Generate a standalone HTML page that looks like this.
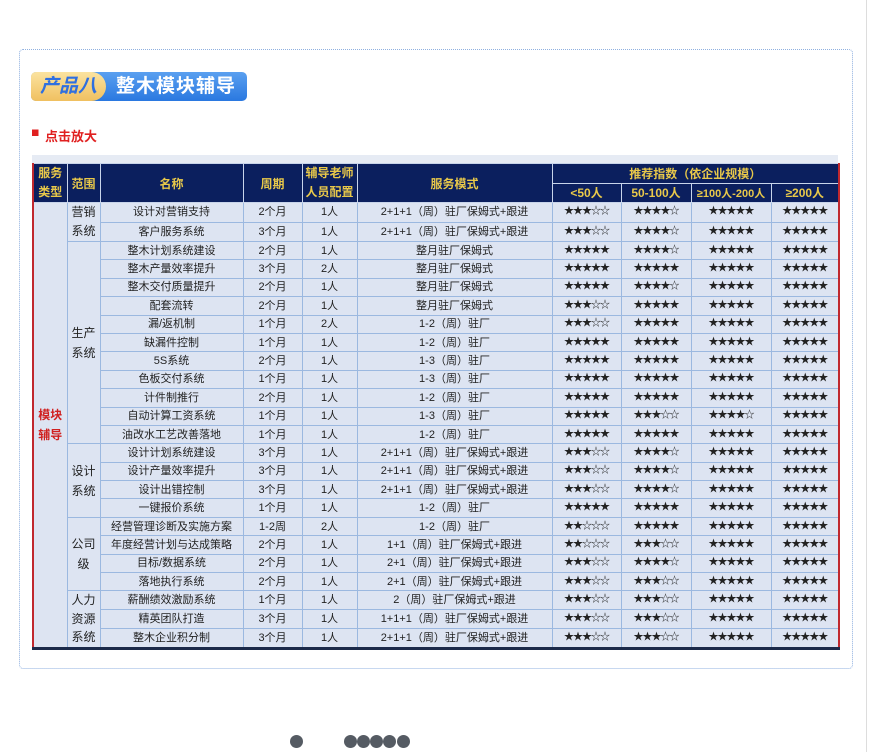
<!DOCTYPE html>
<html><head><meta charset="utf-8"><style>
body{margin:0;width:872px;height:752px;background:#fff;position:relative;overflow:hidden;font-family:"Liberation Sans","Noto Sans CJK SC",sans-serif}
.card{position:absolute;left:19px;top:49px;width:832px;height:618px;border:1px dotted #8fb0e0;border-radius:4px}
.vline{position:absolute;left:866px;top:0;width:1px;height:752px;background:#ddd}
.badge{position:absolute;left:31px;top:72px;width:216px;height:29px;border-radius:5px;background:linear-gradient(#5aa0f0,#2a78e0)}
.badge .y{position:absolute;left:0;top:0;width:75px;height:29px;border-radius:5px 15px 15px 5px;background:linear-gradient(#fbe3a0,#f0c060);color:#2f6fe0;font-style:italic;font-weight:bold;font-size:19px;line-height:29px;text-align:center}
.badge .t{position:absolute;left:85px;top:0;color:#fff;font-weight:bold;font-size:19px;line-height:29px;letter-spacing:1px}
.click{position:absolute;left:32px;top:126px;color:#e02020;font-size:13px;font-weight:bold}
.strip{position:absolute;left:32px;top:155px;width:806px;height:8px;background:#e6ebf4}
table{position:absolute;left:32px;top:163px;width:806px;border-collapse:collapse;table-layout:fixed;font-size:11px;color:#222;border-left:2px solid #c0282e;border-right:2px solid #c0282e;border-bottom:3px solid #1c2a4a}
td,th{border:1px solid #9bb8e0;padding:0;text-align:center;white-space:nowrap;overflow:hidden}
th{background:#0b1f5e;color:#e8c84a;font-size:12px;border-color:#c8d4ea;height:17px;font-weight:bold}
td{background:#dde4f2;height:17.4px;line-height:16px}
td.st{letter-spacing:-1px;font-size:10px}
.dot{position:absolute;width:13px;height:13px;border-radius:50%;background:#555b63}
</style></head><body>
<div class="vline"></div>
<div class="card"></div>
<div class="badge"><div class="y">产品八</div><div class="t">整木模块辅导</div></div>
<div class="click">▘点击放大</div>
<div class="strip"></div>
<table>
<colgroup><col style="width:34px"><col style="width:33px"><col style="width:143px"><col style="width:59px"><col style="width:55px"><col style="width:195px"><col style="width:69px"><col style="width:70px"><col style="width:80px"><col style="width:68px"></colgroup>
<tr><th rowspan="2" style="line-height:19px">服务<br>类型</th><th rowspan="2">范围</th><th rowspan="2">名称</th><th rowspan="2">周期</th><th rowspan="2" style="line-height:19px">辅导老师<br>人员配置</th><th rowspan="2">服务模式</th><th colspan="4">推荐指数（依企业规模）</th></tr>
<tr><th>&lt;50人</th><th>50-100人</th><th style="font-size:11px">≥100人-200人</th><th>≥200人</th></tr>
<tr><td rowspan="24" style="color:#d02020;font-weight:bold;font-size:12px;line-height:20px">模块<br>辅导</td><td rowspan="2" style="font-size:12px;line-height:19px">营销<br>系统</td><td>设计对营销支持</td><td>2个月</td><td>1人</td><td>2+1+1（周）驻厂保姆式+跟进</td><td class="st">★★★☆☆</td><td class="st">★★★★☆</td><td class="st">★★★★★</td><td class="st">★★★★★</td></tr>
<tr><td>客户服务系统</td><td>3个月</td><td>1人</td><td>2+1+1（周）驻厂保姆式+跟进</td><td class="st">★★★☆☆</td><td class="st">★★★★☆</td><td class="st">★★★★★</td><td class="st">★★★★★</td></tr>
<tr><td rowspan="11" style="font-size:12px;line-height:20px">生产<br>系统</td><td>整木计划系统建设</td><td>2个月</td><td>1人</td><td>整月驻厂保姆式</td><td class="st">★★★★★</td><td class="st">★★★★☆</td><td class="st">★★★★★</td><td class="st">★★★★★</td></tr>
<tr><td>整木产量效率提升</td><td>3个月</td><td>2人</td><td>整月驻厂保姆式</td><td class="st">★★★★★</td><td class="st">★★★★★</td><td class="st">★★★★★</td><td class="st">★★★★★</td></tr>
<tr><td>整木交付质量提升</td><td>2个月</td><td>1人</td><td>整月驻厂保姆式</td><td class="st">★★★★★</td><td class="st">★★★★☆</td><td class="st">★★★★★</td><td class="st">★★★★★</td></tr>
<tr><td>配套流转</td><td>2个月</td><td>1人</td><td>整月驻厂保姆式</td><td class="st">★★★☆☆</td><td class="st">★★★★★</td><td class="st">★★★★★</td><td class="st">★★★★★</td></tr>
<tr><td>漏/返机制</td><td>1个月</td><td>2人</td><td>1-2（周）驻厂</td><td class="st">★★★☆☆</td><td class="st">★★★★★</td><td class="st">★★★★★</td><td class="st">★★★★★</td></tr>
<tr><td>缺漏件控制</td><td>1个月</td><td>1人</td><td>1-2（周）驻厂</td><td class="st">★★★★★</td><td class="st">★★★★★</td><td class="st">★★★★★</td><td class="st">★★★★★</td></tr>
<tr><td>5S系统</td><td>2个月</td><td>1人</td><td>1-3（周）驻厂</td><td class="st">★★★★★</td><td class="st">★★★★★</td><td class="st">★★★★★</td><td class="st">★★★★★</td></tr>
<tr><td>色板交付系统</td><td>1个月</td><td>1人</td><td>1-3（周）驻厂</td><td class="st">★★★★★</td><td class="st">★★★★★</td><td class="st">★★★★★</td><td class="st">★★★★★</td></tr>
<tr><td>计件制推行</td><td>2个月</td><td>1人</td><td>1-2（周）驻厂</td><td class="st">★★★★★</td><td class="st">★★★★★</td><td class="st">★★★★★</td><td class="st">★★★★★</td></tr>
<tr><td>自动计算工资系统</td><td>1个月</td><td>1人</td><td>1-3（周）驻厂</td><td class="st">★★★★★</td><td class="st">★★★☆☆</td><td class="st">★★★★☆</td><td class="st">★★★★★</td></tr>
<tr><td>油改水工艺改善落地</td><td>1个月</td><td>1人</td><td>1-2（周）驻厂</td><td class="st">★★★★★</td><td class="st">★★★★★</td><td class="st">★★★★★</td><td class="st">★★★★★</td></tr>
<tr><td rowspan="4" style="font-size:12px;line-height:20px">设计<br>系统</td><td>设计计划系统建设</td><td>3个月</td><td>1人</td><td>2+1+1（周）驻厂保姆式+跟进</td><td class="st">★★★☆☆</td><td class="st">★★★★☆</td><td class="st">★★★★★</td><td class="st">★★★★★</td></tr>
<tr><td>设计产量效率提升</td><td>3个月</td><td>1人</td><td>2+1+1（周）驻厂保姆式+跟进</td><td class="st">★★★☆☆</td><td class="st">★★★★☆</td><td class="st">★★★★★</td><td class="st">★★★★★</td></tr>
<tr><td>设计出错控制</td><td>3个月</td><td>1人</td><td>2+1+1（周）驻厂保姆式+跟进</td><td class="st">★★★☆☆</td><td class="st">★★★★☆</td><td class="st">★★★★★</td><td class="st">★★★★★</td></tr>
<tr><td>一键报价系统</td><td>1个月</td><td>1人</td><td>1-2（周）驻厂</td><td class="st">★★★★★</td><td class="st">★★★★★</td><td class="st">★★★★★</td><td class="st">★★★★★</td></tr>
<tr><td rowspan="4" style="font-size:12px;line-height:20px">公司<br>级</td><td>经营管理诊断及实施方案</td><td>1-2周</td><td>2人</td><td>1-2（周）驻厂</td><td class="st">★★☆☆☆</td><td class="st">★★★★★</td><td class="st">★★★★★</td><td class="st">★★★★★</td></tr>
<tr><td>年度经营计划与达成策略</td><td>2个月</td><td>1人</td><td>1+1（周）驻厂保姆式+跟进</td><td class="st">★★☆☆☆</td><td class="st">★★★☆☆</td><td class="st">★★★★★</td><td class="st">★★★★★</td></tr>
<tr><td>目标/数据系统</td><td>2个月</td><td>1人</td><td>2+1（周）驻厂保姆式+跟进</td><td class="st">★★★☆☆</td><td class="st">★★★★☆</td><td class="st">★★★★★</td><td class="st">★★★★★</td></tr>
<tr><td>落地执行系统</td><td>2个月</td><td>1人</td><td>2+1（周）驻厂保姆式+跟进</td><td class="st">★★★☆☆</td><td class="st">★★★☆☆</td><td class="st">★★★★★</td><td class="st">★★★★★</td></tr>
<tr><td rowspan="3" style="font-size:12px;line-height:18.5px">人力<br>资源<br>系统</td><td>薪酬绩效激励系统</td><td>1个月</td><td>1人</td><td>2（周）驻厂保姆式+跟进</td><td class="st">★★★☆☆</td><td class="st">★★★☆☆</td><td class="st">★★★★★</td><td class="st">★★★★★</td></tr>
<tr><td>精英团队打造</td><td>3个月</td><td>1人</td><td>1+1+1（周）驻厂保姆式+跟进</td><td class="st">★★★☆☆</td><td class="st">★★★☆☆</td><td class="st">★★★★★</td><td class="st">★★★★★</td></tr>
<tr><td>整木企业积分制</td><td>3个月</td><td>1人</td><td>2+1+1（周）驻厂保姆式+跟进</td><td class="st">★★★☆☆</td><td class="st">★★★☆☆</td><td class="st">★★★★★</td><td class="st">★★★★★</td></tr>
</table>
<div class="dot" style="left:290px;top:735px"></div>
<div class="dot" style="left:344px;top:735px"></div>
<div class="dot" style="left:357px;top:735px"></div>
<div class="dot" style="left:370px;top:735px"></div>
<div class="dot" style="left:383px;top:735px"></div>
<div class="dot" style="left:397px;top:735px"></div>
</body></html>
